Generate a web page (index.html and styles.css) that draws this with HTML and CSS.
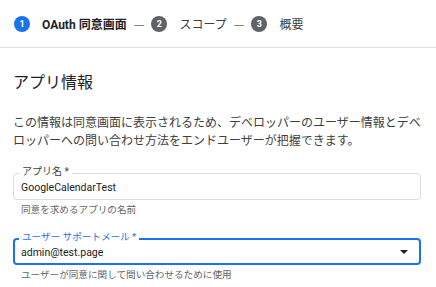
FILE: index.html
```html
<!DOCTYPE html>
<html lang="ja">
<head>
<meta charset="utf-8">
<link rel="stylesheet" href="styles.css">
</head>
<body>
<header class="stepper">
  <div class="step active"><span class="num">1</span><span class="step-label">OAuth 同意画面</span></div>
  <span class="sep">—</span>
  <div class="step"><span class="num">2</span><span class="step-label">スコープ</span></div>
  <span class="sep">—</span>
  <div class="step"><span class="num">3</span><span class="step-label">概要</span></div>
</header>
<main class="content">
  <h1 class="title">アプリ情報</h1>
  <p class="desc">この情報は同意画面に表示されるため、デベロッパーのユーザー情報とデベロッパーへの問い合わせ方法をエンドユーザーが把握できます。</p>

  <div class="field">
    <div class="box">
      <span class="flabel">アプリ名 *</span>
      <span class="value">GoogleCalendarTest</span>
    </div>
    <div class="hint">同意を求めるアプリの名前</div>
  </div>

  <div class="field field-2">
    <div class="box focused">
      <span class="flabel">ユーザー サポートメール *</span>
      <span class="value">admin@test.page</span>
      <span class="arrow"></span>
    </div>
    <div class="hint">ユーザーが同意に関して問い合わせるために使用</div>
  </div>
</main>
</body>
</html>
```

FILE: styles.css
```css
* { box-sizing: border-box; }
html, body { margin: 0; padding: 0; background: #fff; }
body {
  font-family: Roboto, "Noto Sans CJK JP", sans-serif;
  color: #202124;
  width: 436px;
  overflow: hidden;
}
.stepper {
  height: 48px;
  border-bottom: 1px solid #e3e3e3;
  display: flex;
  align-items: center;
  padding: 0 0 0 14px;
  gap: 7px;
  font-size: 12px;
}
.step {
  display: flex;
  align-items: center;
  gap: 12px;
  color: #3c4043;
}
.step.active .step-label { font-weight: 700; color: #202124; }
.num {
  width: 16px;
  height: 16px;
  border-radius: 50%;
  background: #5f6368;
  color: #fff;
  font-size: 9px;
  font-weight: 700;
  display: flex;
  align-items: center;
  justify-content: center;
}
.step.active .num { background: #1a73e8; }
.sep {
  font-family: "Noto Sans CJK JP", sans-serif;
  color: #5f6368;
  font-size: 12px;
}
.content { padding: 0 15px 0 13px; }
.title {
  margin: 23px 0 0;
  font-size: 16px;
  line-height: 24px;
  font-weight: 400;
  color: #202124;
}
.desc {
  margin: 19px 0 0;
  font-size: 12px;
  line-height: 18px;
  color: #3c4043;
}
.field { margin-top: 23px; }
.field-2 { margin-top: 21px; }
.box {
  position: relative;
  height: 27px;
  border: 1px solid #dadce0;
  border-radius: 4px;
  display: flex;
  align-items: center;
  padding: 0 7px;
}
.box.focused {
  border: 2px solid #1a73e8;
  padding: 0 6px;
}
.flabel {
  position: absolute;
  left: 5px;
  top: -8px;
  background: #fff;
  padding: 0 3px;
  font-size: 10px;
  line-height: 12px;
  color: #3c4043;
}
.focused .flabel { left: 4px; top: -9px; color: #1a73e8; font-size: 9.6px; }
.value {
  font-size: 10.5px;
  color: #202124;
  margin-top: 2px;
}
.arrow {
  margin-left: auto;
  margin-right: 5px;
  width: 0;
  height: 0;
  border-left: 4px solid transparent;
  border-right: 4px solid transparent;
  border-top: 4px solid #202124;
}
.hint {
  margin-top: 3px;
  padding-left: 8px;
  font-size: 9.6px;
  line-height: 14px;
  color: #5f6368;
}
```
